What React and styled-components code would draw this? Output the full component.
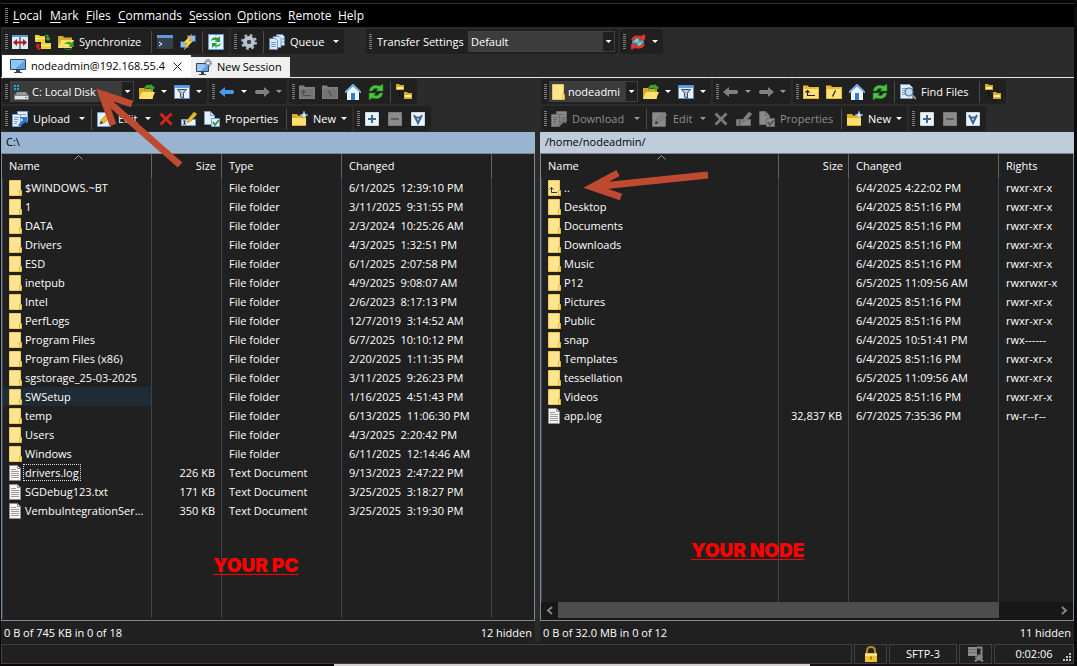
import styled, { createGlobalStyle, css } from "styled-components";

const GlobalStyle = createGlobalStyle`
  * {
    box-sizing: border-box;
  }

  body {
    margin: 0;
    background: #0b0b0b;
    color: #fff;
    font-family: "Open Sans", "Noto Sans", sans-serif;
    font-size: 11px;
    line-height: 16px;
  }

  button,
  select {
    font: inherit;
    color: inherit;
    margin: 0;
    padding: 0;
    border: 0;
    background: none;
    white-space: nowrap;
  }
`;

// Icons, all on a 16px grid
const shapes = {
  compare: (
    <>
      <path d="M0 1h7.500v14H0zM8.500 1H16v14H8.500z" fill="#dcebfa" />
      <path d="M0 1h7.500v2H0zM8.500 1H16v2H8.500z" fill="#5b9bd8" />
      <path d="M1 8.500l4-3.500v2.500h6V5l4 3.500-4 3.500V9.500H5V12z" fill="#b3131b" />
    </>
  ),
  syncFolders: (
    <>
      <path d="M0 1h4l1 1h5v6H0z" fill="#f4cf3c" />
      <path d="M6 8h4l1 1h5v6H6z" fill="#f4cf3c" />
      <path d="M0 4h10v1H0zM6 11h10v1H6z" fill="#fff0a0" />
      <path d="M10 1q4-1 4 3h2l-3 3-3-3h2q0-2-2-2z" fill="#35a32c" />
      <path d="M5 16q-4 0-4-4H0l3-3 3 3H4q0 2 2 2z" fill="#c8202a" />
    </>
  ),
  syncFolder: (
    <>
      <path d="M0 2h5l1 1.500h8V14H0z" fill="#dba92a" />
      <path d="M3 6h13l-3 8H0z" fill="#fbe06a" />
      <path d="M6 10q4-4 8-1l1-2 1 6h-5l1-2q-3-2-6-1z" fill="#35a32c" />
      <path d="M5 13q4 4 8 1l1 1-3 1q-4 1-6-3z" fill="#2b8a24" />
    </>
  ),
  terminal: (
    <>
      <path d="M0 1h16v14H0z" fill="#33404f" />
      <path d="M0 1h16v3H0z" fill="#5c9be0" />
      <path d="M2 8l3 2-3 2" stroke="#fff" fill="none" />
    </>
  ),
  putty: (
    <>
      <path d="M7 1h9v7H7zM0 7h9v7H0z" fill="#3b5d8c" />
      <path d="M8 2h7v5H8zM1 8h7v5H1z" fill="#8fbdf0" />
      <path d="M12 0L3 9h4l-3 7 9-9H9z" fill="#ffd53b" stroke="#b88710" strokeWidth="0.5" />
    </>
  ),
  reload: (
    <>
      <path d="M0.500 0.500h15v15h-15z" fill="#e6f1fb" stroke="#5b9bd8" />
      <path d="M8 0v16" stroke="#5b9bd8" strokeDasharray="2 1" />
      <path d="M3 7q1-5 7-3l2-2v6H7l2-2q-3-1-6 1zM13 9q-1 5-7 3l-2 2V9h5l-2 2q3 1 6-2z" fill="#239b2e" />
    </>
  ),
  gear: (
    <>
      <circle cx="8" cy="8" r="6.500" fill="none" stroke="#a9b4c0" strokeWidth="3" strokeDasharray="2.550 2.550" />
      <circle cx="8" cy="8" r="4" fill="none" stroke="#b9c2cc" strokeWidth="4" />
      <circle cx="8" cy="8" r="2" fill="#39424d" />
    </>
  ),
  queue: (
    <g fill="#dbe9f8" stroke="#5583b8" strokeWidth="0.800">
      <path d="M7.500 0.500h6l2 2v9h-8z" />
      <path d="M4 2.500h6l2 2v9H4z" />
      <path d="M0.500 4.500h6l2 2v9h-8z" />
      <path d="M2 8.500h5M2 10.500h5M2 12.500h5M13 5h2M13 8h2" />
    </g>
  ),
  globe: (
    <>
      <circle cx="8" cy="8" r="6" fill="#4e9be2" />
      <path d="M4 7l3-3 2 2-2 3zM8 9l4-1-1 4-3 1z" fill="#8fd478" />
      <path d="M1 6Q3 0 11 2l4-2v6H9l2-2Q5 3 4 6z" fill="#e23a3a" stroke="#9c1616" strokeWidth="0.500" />
      <path d="M15 10q-2 6-10 4l-4 2v-6h6l-2 2q6 1 7-2z" fill="#e23a3a" stroke="#9c1616" strokeWidth="0.500" />
    </>
  ),
  monitor: (
    <>
      <path d="M0.500 1.500h15v10h-15z" fill="#5fa2ee" stroke="#3b4654" />
      <path d="M1 2h14L5 11H1z" fill="#93c4fa" />
      <path d="M6 12h4v2h2v1H4v-1h2z" fill="#3b4654" />
    </>
  ),
  monitorNew: (
    <>
      <path d="M0.500 4.500h12v8h-12z" fill="#5fa2ee" stroke="#3b4654" />
      <path d="M1 5h11l-7 7H1z" fill="#93c4fa" />
      <path d="M5 13h3v2h2v1H3v-1h2z" fill="#3b4654" />
      <circle cx="12" cy="4" r="3" fill="none" stroke="#7e93ab" strokeWidth="2" strokeDasharray="1.500 0.860" />
      <circle cx="12" cy="4" r="2" fill="#eef4fa" stroke="#7e93ab" />
    </>
  ),
  drive: (
    <>
      <path d="M1 1h2v2H1zM4 1h2v2H4zM1 4h2v2H1zM4 4h2v2H4z" fill="#18a9e6" />
      <path d="M4 8h9l2 3H2z" fill="#8f979e" />
      <path d="M1.500 11.500h14v4h-14z" fill="#dfe4e8" stroke="#7c858c" />
      <path d="M12 13h2v1h-2z" fill="#26a838" />
    </>
  ),
  openFolder: (
    <>
      <path d="M0 4h5l1 1h8v10H0z" fill="#d9a822" />
      <path d="M3 8h13l-3 7H0z" fill="#fce36f" />
      <path d="M5 5q1-5 7-4V0l4 4-4 3V5Q8 3 5 6z" fill="#35a32c" />
    </>
  ),
  filter: (
    <>
      <path d="M0.500 1.500h15v13h-15z" fill="#e8f1fb" stroke="#5b8fcc" />
      <path d="M1 2h14v2H1z" fill="#5ba0ea" />
      <path d="M3.500 5.500h9L9.500 9v5l-3-1V9z" fill="#b9c6d4" stroke="#3d4a58" />
    </>
  ),
  arrowLeft: <path d="M0 8l6-5v3h8q2 2 0 4H6v3z" fill="currentColor" />,
  arrowRight: <path d="M16 8l-6-5v3H2Q0 8 2 10h8v3z" fill="currentColor" />,
  parent: (
    <>
      <path d="M0 1.500h5l1 1.500h10v12H0z" fill="var(--f1)" />
      <path d="M1 5h14v9H1z" fill="var(--f2)" />
      <path d="M4.500 6.500v5H12M2.500 8.500l2-2 2 2" fill="none" stroke="var(--f3)" strokeWidth="1.200" />
    </>
  ),
  root: (
    <>
      <path d="M0 1.500h5l1 1.500h10v12H0z" fill="var(--f1)" />
      <path d="M1 5h14v9H1z" fill="var(--f2)" />
      <path d="M9.500 6.500l-3 6" fill="none" stroke="var(--f3)" strokeWidth="1.200" />
    </>
  ),
  rootLocal: (
    <>
      <path d="M0 1.500h5l1 1.500h10v12H0z" fill="var(--f1)" />
      <path d="M1 5h14v9H1z" fill="var(--f2)" />
      <path d="M6.500 6.500l3 6" fill="none" stroke="var(--f3)" strokeWidth="1.200" />
    </>
  ),
  home: (
    <>
      <path d="M2 7l6-5 6 5v9H2z" fill="#eef5fc" />
      <path d="M0 8.500L8 1l8 7.500" fill="none" stroke="#7aaee6" strokeWidth="2" />
      <path d="M6 9h4v7H6z" fill="#2f7fd6" />
    </>
  ),
  refresh: (
    <>
      <path d="M1 7Q3-1 12 2l3-2v7H8l2-2Q6 3 4 7z" fill="#4cc33f" stroke="#1d7a1a" strokeWidth="0.600" />
      <path d="M15 9q-2 8-11 5l-3 2V9h7l-2 2q4 2 6-2z" fill="#4cc33f" stroke="#1d7a1a" strokeWidth="0.600" />
    </>
  ),
  tree: (
    <>
      <path d="M0 0h3l1 1h4v5H0zM8 8h3l1 1h4v6H8z" fill="#d9ab24" />
      <path d="M1 3h6v2H1zM9 11h6v2H9z" fill="#fff3a8" />
      <path d="M3.500 7v5H8" fill="none" stroke="#000" strokeDasharray="1 1" />
    </>
  ),
  transfer: (
    <>
      <path d="M5.500 0.500h10v10h-10z" fill="var(--p1)" stroke="var(--p2)" />
      <path d="M0.500 3.500h8v12h-8z" fill="var(--p1)" stroke="var(--p2)" />
      <path d="M2 6.500h5M2 8.500h4M2 10.500h4M2 12.500h3M9 3.500h5" stroke="var(--p2)" />
      <path d="M15 6v7l-2-2-5 5-2-2 5-5-3-3z" fill="var(--p3)" />
    </>
  ),
  edit: (
    <>
      <path d="M0.500 1.500h13v14H0.500z" fill="var(--p1)" stroke="var(--p2)" />
      <path d="M3 13l1-4 8-8 3 3-8 8z" fill="var(--f1)" stroke="var(--f4)" strokeWidth="0.600" />
      <path d="M3 13l1-3 2 2z" fill="#222" />
    </>
  ),
  cross: <path d="M1.500 3.500L3.500 1.500 8 6l4.500-4.500 2 2L10 8l4.500 4.500-2 2L8 10l-4.500 4.500-2-2L6 8z" fill="var(--x)" />,
  rename: (
    <>
      <path d="M0.500 8.500h14v6H0.500z" fill="var(--p1)" stroke="var(--p2)" />
      <path d="M2 10h3M2 13h3M3.500 10v3" stroke="var(--f3)" />
      <path d="M6 12l1-4 6-7 3 2-6 7z" fill="var(--f1)" stroke="var(--f4)" strokeWidth="0.600" />
    </>
  ),
  properties: (
    <>
      <path d="M0.500 0.500h6l4 4v9h-10z" fill="var(--p1)" stroke="var(--p2)" />
      <path d="M6.500 0.500v4h4" fill="none" stroke="var(--p2)" />
      <path d="M7.500 7.500h8v8h-8z" fill="var(--p1)" stroke="var(--p2)" />
      <path d="M9 11l2 3 4-5" fill="none" stroke="var(--g)" strokeWidth="1.800" />
    </>
  ),
  newFolder: (
    <>
      <path d="M0 3h5l1 1.500h8V15H0z" fill="#e0ad28" />
      <path d="M0 7h14v7H0z" fill="#fde070" />
      <path d="M12 0l1 3 3 1-3 1-1 3-1-3-3-1 3-1z" fill="#d7e9fb" stroke="#8db7df" strokeWidth="0.500" />
    </>
  ),
  plus: (
    <>
      <path d="M1.500 1.500h13v13h-13z" fill="#eef4fb" stroke="#c8d6e6" />
      <path d="M8 4v8M4 8h8" stroke="#3f6596" strokeWidth="2" />
    </>
  ),
  minus: (
    <>
      <path d="M1.500 1.500h13v13h-13z" fill="#8c8c8c" stroke="#7b7b7b" />
      <path d="M4 8h8" stroke="#5d5d5d" strokeWidth="2" />
    </>
  ),
  invert: (
    <>
      <path d="M1.500 1.500h13v13h-13z" fill="#eef4fb" stroke="#c8d6e6" />
      <path d="M4 4l4 8 4-8M5.500 6.500h5" fill="none" stroke="#3f6596" strokeWidth="2" />
    </>
  ),
  find: (
    <>
      <path d="M0.500 0.500h9l3 3v11h-12z" fill="#e4eefa" stroke="#6d9bd0" />
      <path d="M2 4.500h7M2 6.500h3M2 8.500h2M2 10.500h3" stroke="#6d9bd0" />
      <circle cx="9" cy="8" r="4" fill="#b9dcfa" stroke="#5b6b7c" strokeWidth="1.200" />
      <path d="M12 11l4 4" stroke="#8794a3" strokeWidth="2" />
    </>
  ),
  lock: (
    <>
      <path d="M4 8V5q0-4 4-4t4 4v3" fill="none" stroke="#b98a1c" strokeWidth="2" />
      <path d="M2 7h12v9H2z" fill="#f2c230" />
      <path d="M2 8h12v2H2z" fill="#fbe288" />
      <path d="M7.500 10.500h1v3h-1z" fill="#4a3708" />
    </>
  ),
  compress: (
    <>
      <path d="M0 1h9v9H0z" fill="#8d8d8d" />
      <path d="M0 3.500h9M0 6.500h9" stroke="#6b6b6b" />
      <path d="M9 1.500h4.500v8H10M10 9.500V14M7 11.500h8M7 15.500l2-2h4l2 2" fill="none" stroke="#858585" strokeWidth="2" />
    </>
  ),
};

const IconSvg = styled.svg`
  flex: none;
  width: 16px;
  height: 16px;
  display: block;
`;

const Icon = ({ name }) => (
  <IconSvg viewBox="0 0 16 16" aria-hidden="true">
    {shapes[name]}
  </IconSvg>
);

const FileIconSvg = styled.svg`
  flex: none;
  width: 13px;
  height: 16px;
  display: block;
`;

const FileIcon = ({ kind }) => (
  <FileIconSvg viewBox="0 0 13 16" aria-hidden="true">
    {kind === "file" ? (
      <>
        <path d="M0.500 0.500h8l3 3v12h-11z" fill="#f6f6f6" stroke="#8e8e8e" />
        <path d="M8.500 0.500v3h3" fill="none" stroke="#8e8e8e" />
        <path d="M2 4.500h5M2 6.500h8M2 8.500h8M2 10.500h8M2 12.500h8" stroke="#9a9a9a" />
      </>
    ) : (
      <>
        <path d="M0.500 0.500h11v15h-11z" fill="#ffe492" stroke="#efc94f" />
        <path d="M10.500 10.500h2v5h-2z" fill="#ffe492" stroke="#e3b93d" />
        {kind === "up" && (
          <path d="M3.500 7v5.500H9M1.500 9.500l2-2 2 2" fill="none" stroke="#33373c" />
        )}
      </>
    )}
  </FileIconSvg>
);

const Window = styled.div`
  height: 100vh;
  min-height: 480px;
  display: flex;
  flex-direction: column;
  padding: 0 3px 0 1px;
  background: #0b0b0b;
`;

const TopEdge = styled.div`
  flex: none;
  height: 4px;
  background: #050505;
  border-bottom: 1px solid #303030;
`;

const Grip = styled.span`
  flex: none;
  width: 3px;
  height: 15px;
  margin: 0 1px 0 3px;
  background: repeating-linear-gradient(#7c7c7c 0 1px, transparent 1px 2px);
`;

const MenuBar = styled.nav`
  flex: none;
  display: flex;
  align-items: center;
  height: 23px;
  padding-left: 1px;
  background: #000;
  font-size: 12px;
`;

const MenuItem = styled.button`
  width: ${({ $width }) => $width}px;
  padding-left: 4px;
  text-align: left;
  text-underline-offset: 2px;
`;

const Bar = styled.div`
  flex: none;
  display: flex;
  gap: 2px;
  padding: ${({ $main }) => ($main ? "2px 1px 1px" : "1px 1px 1px")};
  background: #2b2b2b;
  font-size: ${({ $main }) => ($main ? 11 : 12)}px;
`;

const Group = styled.div`
  flex: none;
  display: flex;
  align-items: center;
  height: 25px;
  padding-right: 1px;
  border-radius: 3px;
  background: #202020;
  margin-left: ${({ $gap = 0 }) => $gap}px;
`;

const Separator = styled.span`
  flex: none;
  width: 1px;
  height: 22px;
  margin: 0 2px;
  background: #4b4b4b;
`;

const disabledColors = css`
  --f1: #808080;
  --f2: #747474;
  --f3: #505050;
  --f4: #6a6a6a;
  --p1: #8b8b8b;
  --p2: #6b6b6b;
  --p3: #777;
  --x: #7a7a7a;
  --g: #555;
  color: #8f8f8f;
`;

const ToolButton = styled.button`
  --f1: #e8b931;
  --f2: #fde27a;
  --f3: #222;
  --f4: #a87c18;
  --p1: #e8f1fb;
  --p2: #6f9fd6;
  --p3: #2f74cf;
  --x: #d8231f;
  --g: #2f9a2b;
  flex: none;
  display: flex;
  align-items: center;
  gap: 5px;
  width: ${({ $width = 23 }) => $width}px;
  height: 23px;
  padding-left: 3px;
  font-size: 11px;
  ${({ disabled }) => disabled && disabledColors}
`;

const NavButton = styled(ToolButton)`
  color: ${({ disabled }) => (disabled ? "#808080" : "#4a98ea")};
`;

const Caret = styled.span`
  flex: none;
  width: 6px;
  height: 3px;
  margin: 0 4px 0 auto;
  background: ${({ $dim }) => ($dim ? "#9a9a9a" : "#fff")};
  clip-path: polygon(0 0, 100% 0, 50% 100%);
`;

const Combo = styled.div`
  flex: none;
  display: flex;
  align-items: center;
  gap: 3px;
  width: ${({ $width }) => $width}px;
  height: 21px;
  margin: 0 2px 0 1px;
  padding-left: 2px;
  border: 1px solid #404040;
  background: #3c3c3c;
  font-size: 11px;
`;

const ComboSelect = styled.select`
  flex: 1;
  min-width: 0;
  height: 19px;
  appearance: none;
  outline: none;
`;

const ComboArrow = styled.span`
  flex: none;
  display: flex;
  align-items: center;
  justify-content: center;
  width: 11px;
  height: 19px;
  background: #202020;
  pointer-events: none;

  &::after {
    content: "";
    width: 6px;
    height: 3px;
    background: #fff;
    clip-path: polygon(0 0, 100% 0, 50% 100%);
  }
`;

const SettingsLabel = styled.label`
  width: 94px;
  padding-left: 4px;
  white-space: nowrap;
`;

const Tabs = styled.div`
  flex: none;
  display: flex;
  align-items: flex-end;
  height: 23px;
  padding-left: 1px;
  background: #2b2b2b;
  border-bottom: 1px solid #e6e6e6;
`;

const Tab = styled.button`
  display: flex;
  align-items: center;
  gap: 5px;
  width: ${({ $active }) => ($active ? 189 : 99)}px;
  height: ${({ $active }) => ($active ? 22 : 20)}px;
  padding-left: ${({ $active }) => ($active ? 8 : 5)}px;
  background: ${({ $active }) => ($active ? "#fff" : "#f0f0f0")};
  color: #000;
`;

const CloseMark = styled.svg`
  flex: none;
  width: 9px;
  height: 9px;
  margin: 0 9px 0 auto;
  stroke: #222;
`;

const Panels = styled.main`
  flex: 1;
  min-height: 0;
  display: flex;
  gap: 5px;
  background: #2b2b2b;
`;

const Panel = styled.section`
  position: relative;
  flex: 1;
  min-width: 0;
  display: flex;
  flex-direction: column;
  overflow: hidden;
`;

const PathBar = styled.div`
  flex: none;
  height: 21px;
  padding: 2px 5px;
  background: ${({ $active }) => ($active ? "#99b4d1" : "#bfcddb")};
  color: #000;
`;

const ListBox = styled.div`
  flex: 1;
  min-height: 0;
  display: flex;
  flex-direction: column;
  border: 1px solid #828790;
  background: #202020;
`;

const TableArea = styled.div`
  flex: 1;
  min-height: 0;
  padding-bottom: ${({ $pad }) => ($pad ? "2px" : "0")};
  overflow: hidden;
`;

const FileTable = styled.table`
  width: 100%;
  height: 100%;
  table-layout: fixed;
  border-collapse: separate;
  border-spacing: 0;
`;

const HeadCell = styled.th`
  position: relative;
  width: ${({ $width }) => ($width ? `${$width}px` : "auto")};
  height: 24px;
  padding: 0 5px 0 7px;
  border-right: ${({ $width }) => ($width ? "1px solid #636363" : "0")};
  font-weight: 400;
  text-align: ${({ $right }) => ($right ? "right" : "left")};
`;

const SortMark = styled.svg`
  position: absolute;
  top: 1px;
  left: calc(50% - 3px);
  width: 9px;
  height: 5px;
  fill: none;
  stroke: #9a9a9a;
`;

const Cell = styled.td`
  height: ${({ $filler }) => ($filler ? "auto" : "19px")};
  padding: 0 6px 0 7px;
  border-right: 1px solid #3a444f;
  text-align: ${({ $right }) => ($right ? "right" : "left")};
  white-space: pre;
  overflow: hidden;
  background: ${({ $hot }) => ($hot ? "#1f2b35" : "none")};

  &:last-child {
    border-right: 0;
  }

  &:first-child {
    padding-right: 0;
    box-shadow: inset 1px 0 #34475a;
  }
`;

const FileName = styled.span`
  display: flex;
  align-items: center;
  gap: 2px;
`;

const NameText = styled.span`
  padding: 0 1px;
  line-height: 15px;
  outline: ${({ $focused }) => ($focused ? "1px dotted #ddd" : "none")};
`;

const ScrollTrack = styled.div`
  flex: none;
  display: flex;
  align-items: center;
  height: 18px;
  padding-bottom: 2px;
  background: #171717;
`;

const ScrollThumb = styled.div`
  flex: ${({ $grow }) => $grow};
  height: 16px;
  background: ${({ $empty }) => ($empty ? "none" : "#4d4d4d")};
`;

const ScrollArrow = styled.svg`
  flex: none;
  width: 17px;
  height: 16px;
  fill: none;
  stroke: #858585;
  stroke-width: 2;
`;

const PanelStatus = styled.div`
  flex: none;
  display: flex;
  justify-content: space-between;
  height: 21px;
  padding: 4px 3px 0;
  background: #202020;
`;

const StatusBar = styled.footer`
  flex: none;
  display: flex;
  gap: 2px;
  height: 22px;
  padding: 2px 0 0;
  background: #202020;
`;

const StatusCell = styled.div`
  position: relative;
  flex: ${({ $width }) => ($width ? `0 0 ${$width}px` : "1")};
  display: flex;
  align-items: center;
  justify-content: center;
  border: 1px solid #404040;
`;

const SizeGrip = styled.svg`
  position: absolute;
  right: 1px;
  bottom: 1px;
  width: 9px;
  height: 9px;
  fill: #c4c4c4;
`;

const Desktop = styled.div`
  flex: none;
  height: 2px;
  background: linear-gradient(90deg, #0a0606 31%, #d6d2d2 31%, #d6d2d2 75.4%, #170f14 75.4%);
`;

const Note = styled.strong`
  position: absolute;
  left: ${({ $left }) => $left}px;
  bottom: ${({ $bottom }) => $bottom}px;
  color: #f00;
  font: 900 19px/22px "Inter", "Liberation Sans", sans-serif;
  text-decoration: underline;
  text-decoration-thickness: 1px;
  text-underline-offset: 2px;
  white-space: nowrap;
`;

const Pointer = styled.svg`
  position: absolute;
  left: ${({ $left }) => $left}px;
  top: ${({ $top }) => $top}px;
  fill: none;
  stroke: #bd4a31;
  stroke-width: 7;
  pointer-events: none;
`;

const menus = [
  ["Local", 37],
  ["Mark", 36],
  ["Files", 32],
  ["Commands", 71],
  ["Session", 48],
  ["Options", 51],
  ["Remote", 50],
  ["Help", 34],
];

const localFiles = [
  ["$WINDOWS.~BT", "6/1/2025  12:39:10 PM"],
  ["1", "3/11/2025  9:31:55 PM"],
  ["DATA", "2/3/2024  10:25:26 AM"],
  ["Drivers", "4/3/2025  1:32:51 PM"],
  ["ESD", "6/1/2025  2:07:58 PM"],
  ["inetpub", "4/9/2025  9:08:07 AM"],
  ["Intel", "2/6/2023  8:17:13 PM"],
  ["PerfLogs", "12/7/2019  3:14:52 AM"],
  ["Program Files", "6/7/2025  10:10:12 PM"],
  ["Program Files (x86)", "2/20/2025  1:11:35 PM"],
  ["sgstorage_25-03-2025", "3/11/2025  9:26:23 PM"],
  ["SWSetup", "1/16/2025  4:51:43 PM"],
  ["temp", "6/13/2025  11:06:30 PM"],
  ["Users", "4/3/2025  2:20:42 PM"],
  ["Windows", "6/11/2025  12:14:46 AM"],
  ["drivers.log", "9/13/2023  2:47:22 PM", "226 KB"],
  ["SGDebug123.txt", "3/25/2025  3:18:27 PM", "171 KB"],
  ["VembuIntegrationSer...", "3/25/2025  3:19:30 PM", "350 KB"],
].map(([name, changed, size]) => ({
  name,
  kind: size ? "file" : "folder",
  cells: [size, size ? "Text Document" : "File folder", changed, ""],
}));

const remoteFiles = [
  ["..", "6/4/2025 4:22:02 PM", "rwxr-xr-x"],
  ["Desktop", "6/4/2025 8:51:16 PM", "rwxr-xr-x"],
  ["Documents", "6/4/2025 8:51:16 PM", "rwxr-xr-x"],
  ["Downloads", "6/4/2025 8:51:16 PM", "rwxr-xr-x"],
  ["Music", "6/4/2025 8:51:16 PM", "rwxr-xr-x"],
  ["P12", "6/5/2025 11:09:56 AM", "rwxrwxr-x"],
  ["Pictures", "6/4/2025 8:51:16 PM", "rwxr-xr-x"],
  ["Public", "6/4/2025 8:51:16 PM", "rwxr-xr-x"],
  ["snap", "6/4/2025 10:51:41 PM", "rwx------"],
  ["Templates", "6/4/2025 8:51:16 PM", "rwxr-xr-x"],
  ["tessellation", "6/5/2025 11:09:56 AM", "rwxr-xr-x"],
  ["Videos", "6/4/2025 8:51:16 PM", "rwxr-xr-x"],
  ["app.log", "6/7/2025 7:35:36 PM", "rw-r--r--", "32,837 KB"],
].map(([name, changed, rights, size]) => ({
  name,
  kind: size ? "file" : name === ".." ? "up" : "folder",
  cells: [size, changed, rights],
}));

const localColumns = [["Name", 150], ["Size", 70], ["Type", 120], ["Changed", 150], [""]];
const remoteColumns = [["Name", 238], ["Size", 70], ["Changed", 150], ["Rights"]];

const Tool = ({ icon, label, ...props }) => (
  <ToolButton aria-label={label} {...props}>
    <Icon name={icon} />
  </ToolButton>
);

const DropTool = ({ icon, label, nav, ...props }) => {
  const Base = nav ? NavButton : ToolButton;
  return (
    <Base aria-label={label} $width={35} {...props}>
      <Icon name={icon} />
      <Caret $dim={props.disabled} />
    </Base>
  );
};

const FileList = ({ columns, files, hot, focused, pad }) => (
  <TableArea $pad={pad}>
    <FileTable>
      <thead>
        <tr>
          {columns.map(([title, width]) => (
            <HeadCell key={title} $width={width} $right={title === "Size"}>
              {title}
              {title === "Name" && (
                <SortMark viewBox="0 0 9 5">
                  <path d="M0.500 4.500l4-4 4 4" />
                </SortMark>
              )}
            </HeadCell>
          ))}
        </tr>
      </thead>
      <tbody>
        {files.map(({ name, kind, cells }) => (
          <tr key={name}>
            <Cell $hot={name === hot}>
              <FileName>
                <FileIcon kind={kind} />
                <NameText $focused={name === focused}>{name}</NameText>
              </FileName>
            </Cell>
            {cells.map((text, i) => (
              <Cell key={i} $right={i === 0}>
                {text}
              </Cell>
            ))}
          </tr>
        ))}
        <tr>
          {columns.map(([title]) => (
            <Cell key={title} $filler />
          ))}
        </tr>
      </tbody>
    </FileTable>
  </TableArea>
);

const PanelBars = ({ remote, drive, driveIcon, comboWidth }) => (
  <>
    <Bar>
      <Group>
        <Grip />
        <Combo $width={comboWidth}>
          {driveIcon}
          <ComboSelect aria-label="Directory">
            <option>{drive}</option>
          </ComboSelect>
          <ComboArrow />
        </Combo>
        <DropTool icon="openFolder" label="Open directory" />
        <DropTool icon="filter" label="Filter" />
      </Group>
      <Group>
        <Grip />
        <DropTool nav icon="arrowLeft" label="Back" disabled={remote} />
        <DropTool nav icon="arrowRight" label="Forward" disabled />
      </Group>
      <Group>
        <Grip />
        <Tool icon="parent" label="Parent directory" disabled={!remote} />
        <Tool icon={remote ? "root" : "rootLocal"} label="Root directory" disabled={!remote} />
        <Tool icon="home" label="Home directory" />
        <Tool icon="refresh" label="Refresh" />
        <Separator />
        {remote && (
          <>
            <ToolButton $width={80}>
              <Icon name="find" />
              Find Files
            </ToolButton>
            <Separator />
          </>
        )}
        <Tool icon="tree" label="Directory tree" />
      </Group>
    </Bar>
    <Bar>
      <Group>
        <Grip />
        <ToolButton $width={remote ? 96 : 80} disabled={remote}>
          <Icon name="transfer" />
          {remote ? "Download" : "Upload"}
          <Caret $dim={remote} />
        </ToolButton>
        <Separator />
        <ToolButton $width={61} disabled={remote}>
          <Icon name="edit" />
          Edit
          <Caret $dim={remote} />
        </ToolButton>
        <Tool icon="cross" label="Delete" disabled={remote} />
        <Tool icon="rename" label="Rename" disabled={remote} />
        <ToolButton $width={83} disabled={remote}>
          <Icon name="properties" />
          Properties
        </ToolButton>
        <Separator />
        <ToolButton $width={62}>
          <Icon name="newFolder" />
          New
          <Caret />
        </ToolButton>
      </Group>
      <Group>
        <Grip />
        <Tool icon="plus" label="Select files" />
        <Tool icon="minus" label="Unselect files" disabled />
        <Tool icon="invert" label="Invert selection" />
      </Group>
    </Bar>
  </>
);

const App = () => (
  <Window>
    <GlobalStyle />
    <TopEdge />
    <MenuBar>
      <Grip />
      {menus.map(([title, width]) => (
        <MenuItem key={title} $width={width}>
          <u>{title[0]}</u>
          {title.slice(1)}
        </MenuItem>
      ))}
    </MenuBar>

    <Bar $main>
      <Group>
        <Grip />
        <Tool icon="compare" label="Compare" />
        <Tool icon="syncFolders" label="Synchronize browsing" />
        <ToolButton $width={94}>
          <Icon name="syncFolder" />
          Synchronize
        </ToolButton>
        <Separator />
        <Tool icon="terminal" label="Console" />
        <Tool icon="putty" label="PuTTY" />
        <Separator />
        <Tool icon="reload" label="Synchronize panels" />
      </Group>
      <Group>
        <Grip />
        <Tool icon="gear" label="Preferences" />
        <Separator />
        <ToolButton $width={77}>
          <Icon name="queue" />
          Queue
          <Caret />
        </ToolButton>
      </Group>
      <Group $gap={20}>
        <Grip />
        <SettingsLabel htmlFor="transfer-settings">Transfer Settings</SettingsLabel>
        <Combo $width={147}>
          <ComboSelect id="transfer-settings">
            <option>Default</option>
          </ComboSelect>
          <ComboArrow />
        </Combo>
      </Group>
      <Group>
        <Grip />
        <DropTool icon="globe" label="Reconnect" />
      </Group>
    </Bar>

    <Tabs>
      <Tab $active>
        <Icon name="monitor" />
        nodeadmin@192.168.55.4
        <CloseMark viewBox="0 0 9 9">
          <path d="M0.500 0.500l8 8M8.500 0.500l-8 8" />
        </CloseMark>
      </Tab>
      <Tab>
        <Icon name="monitorNew" />
        New Session
      </Tab>
    </Tabs>

    <Panels>
      <Panel>
        <PanelBars drive="C: Local Disk" driveIcon={<Icon name="drive" />} comboWidth={124} />
        <PathBar $active>C:\</PathBar>
        <ListBox>
          <FileList columns={localColumns} files={localFiles} hot="SWSetup" focused="drivers.log" pad />
        </ListBox>
        <PanelStatus>
          <span>0 B of 745 KB in 0 of 18</span>
          <span>12 hidden</span>
        </PanelStatus>
        <Note $left={212} $bottom={65}>YOUR PC</Note>
        <Pointer $left={94} $top={10} width="92" height="84">
          <path d="M85 77L8 9M37 16L7 6L18 37" />
        </Pointer>
      </Panel>

      <Panel>
        <PanelBars remote drive="nodeadmi" driveIcon={<FileIcon kind="folder" />} comboWidth={89} />
        <PathBar>/home/nodeadmin/</PathBar>
        <ListBox>
          <FileList columns={remoteColumns} files={remoteFiles} />
          <ScrollTrack>
            <ScrollArrow viewBox="0 0 17 16">
              <path d="M11 5L7 8.500l4 3.500" />
            </ScrollArrow>
            <ScrollThumb $grow={441} />
            <ScrollThumb $grow={57} $empty />
            <ScrollArrow viewBox="0 0 17 16">
              <path d="M6 5l4 3.500L6 12" />
            </ScrollArrow>
          </ScrollTrack>
        </ListBox>
        <PanelStatus>
          <span>0 B of 32.0 MB in 0 of 12</span>
          <span>11 hidden</span>
        </PanelStatus>
        <Note $left={151} $bottom={80}>YOUR NODE</Note>
        <Pointer $left={40} $top={86} width="132" height="40">
          <path d="M128 11L12 23M38 9L12 23L41 33" />
        </Pointer>
      </Panel>
    </Panels>

    <StatusBar>
      <StatusCell />
      <StatusCell $width={33}>
        <Icon name="lock" />
      </StatusCell>
      <StatusCell $width={68}>SFTP-3</StatusCell>
      <StatusCell $width={33}>
        <Icon name="compress" />
      </StatusCell>
      <StatusCell $width={80}>
        0:02:06
        <SizeGrip viewBox="0 0 9 9">
          <path d="M6 0h2v2H6zM3 3h2v2H3zM6 3h2v2H6zM0 6h2v2H0zM3 6h2v2H3zM6 6h2v2H6z" />
        </SizeGrip>
      </StatusCell>
    </StatusBar>
    <Desktop />
  </Window>
);

export default App;
